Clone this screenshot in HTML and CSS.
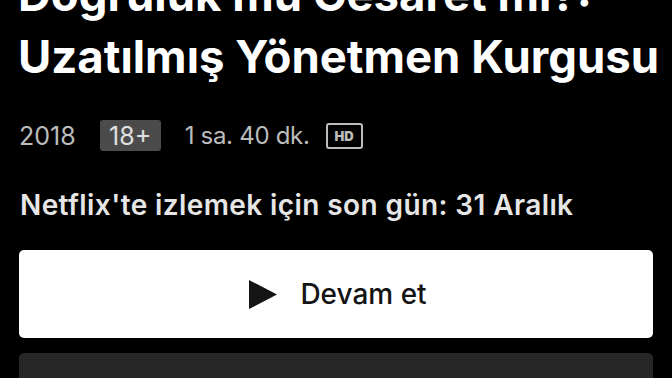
FILE: index.html
```html
<!DOCTYPE html>
<html lang="tr">
<head>
<meta charset="utf-8">
<link rel="stylesheet" href="styles.css">
</head>
<body>
<main class="page">
  <h1 class="title">Doğruluk mu Cesaret mi?:<br>Uzatılmış Yönetmen Kurgusu</h1>
  <div class="meta">
    <span class="year">2018</span>
    <span class="rating">18+</span>
    <span class="duration">1 sa. 40 dk.</span>
    <span class="hd">HD</span>
  </div>
  <p class="notice">Netflix'te izlemek için son gün: 31 Aralık</p>
  <button class="btn btn-play">
    <svg class="play-icon" viewBox="0 0 28 29" width="28" height="29"><path d="M0 0 L28 14.5 L0 29 Z" fill="#141414"/></svg>
    <span>Devam et</span>
  </button>
  <button class="btn btn-dark"><span></span></button>
</main>
</body>
</html>
```
FILE: styles.css
```css
html, body {
  margin: 0;
  padding: 0;
  background: #000;
}
body {
  font-family: Inter, Roboto, "Liberation Sans", sans-serif;
  color: #fff;
  overflow: hidden;
  height: 378px;
}
.page {
  padding: 0 19px 0 19px;
  display: flex;
  flex-direction: column;
}
.title {
  margin: -36px 0 0 -1px;
  font-size: 45.5px;
  font-weight: 700;
  line-height: 62px;
  letter-spacing: 0;
  color: #fff;
  width: 660px;
}
.meta {
  display: flex;
  align-items: center;
  margin-top: 32px;
  height: 31px;
  font-size: 25px;
  color: #bcbcbc;
}
.year {
  margin-right: 24px;
}
.rating {
  background: #4b4b4b;
  color: #e0e0e0;
  border-radius: 3px;
  height: 31px;
  width: 61px;
  display: flex;
  align-items: center;
  justify-content: center;
  margin-right: 24px;
}
.duration {
  font-size: 24px;
  letter-spacing: -0.3px;
  margin-right: 16px;
}
.hd {
  box-sizing: border-box;
  width: 37px;
  height: 26px;
  border: 2px solid #bcbcbc;
  border-radius: 3px;
  font-size: 13px;
  font-weight: 900;
  display: flex;
  align-items: center;
  justify-content: center;
  color: #bcbcbc;
}
.notice {
  margin: 38px 0 0 1px;
  font-size: 28px;
  font-weight: 600;
  line-height: 32px;
  letter-spacing: 0.4px;
  color: #e6e6e6;
}
.btn {
  border: none;
  border-radius: 5px;
  font-family: inherit;
  display: flex;
  align-items: center;
  justify-content: center;
  gap: 23px;
  width: 634px;
  padding: 0 0 0 4px;
}
.btn-play {
  margin-top: 29px;
  height: 88px;
  background: #fff;
  color: #141414;
  font-size: 28px;
  font-weight: 500;
}
.play-icon {
  display: block;
}
.btn-dark {
  margin-top: 15px;
  height: 88px;
  background: #262626;
}
```
